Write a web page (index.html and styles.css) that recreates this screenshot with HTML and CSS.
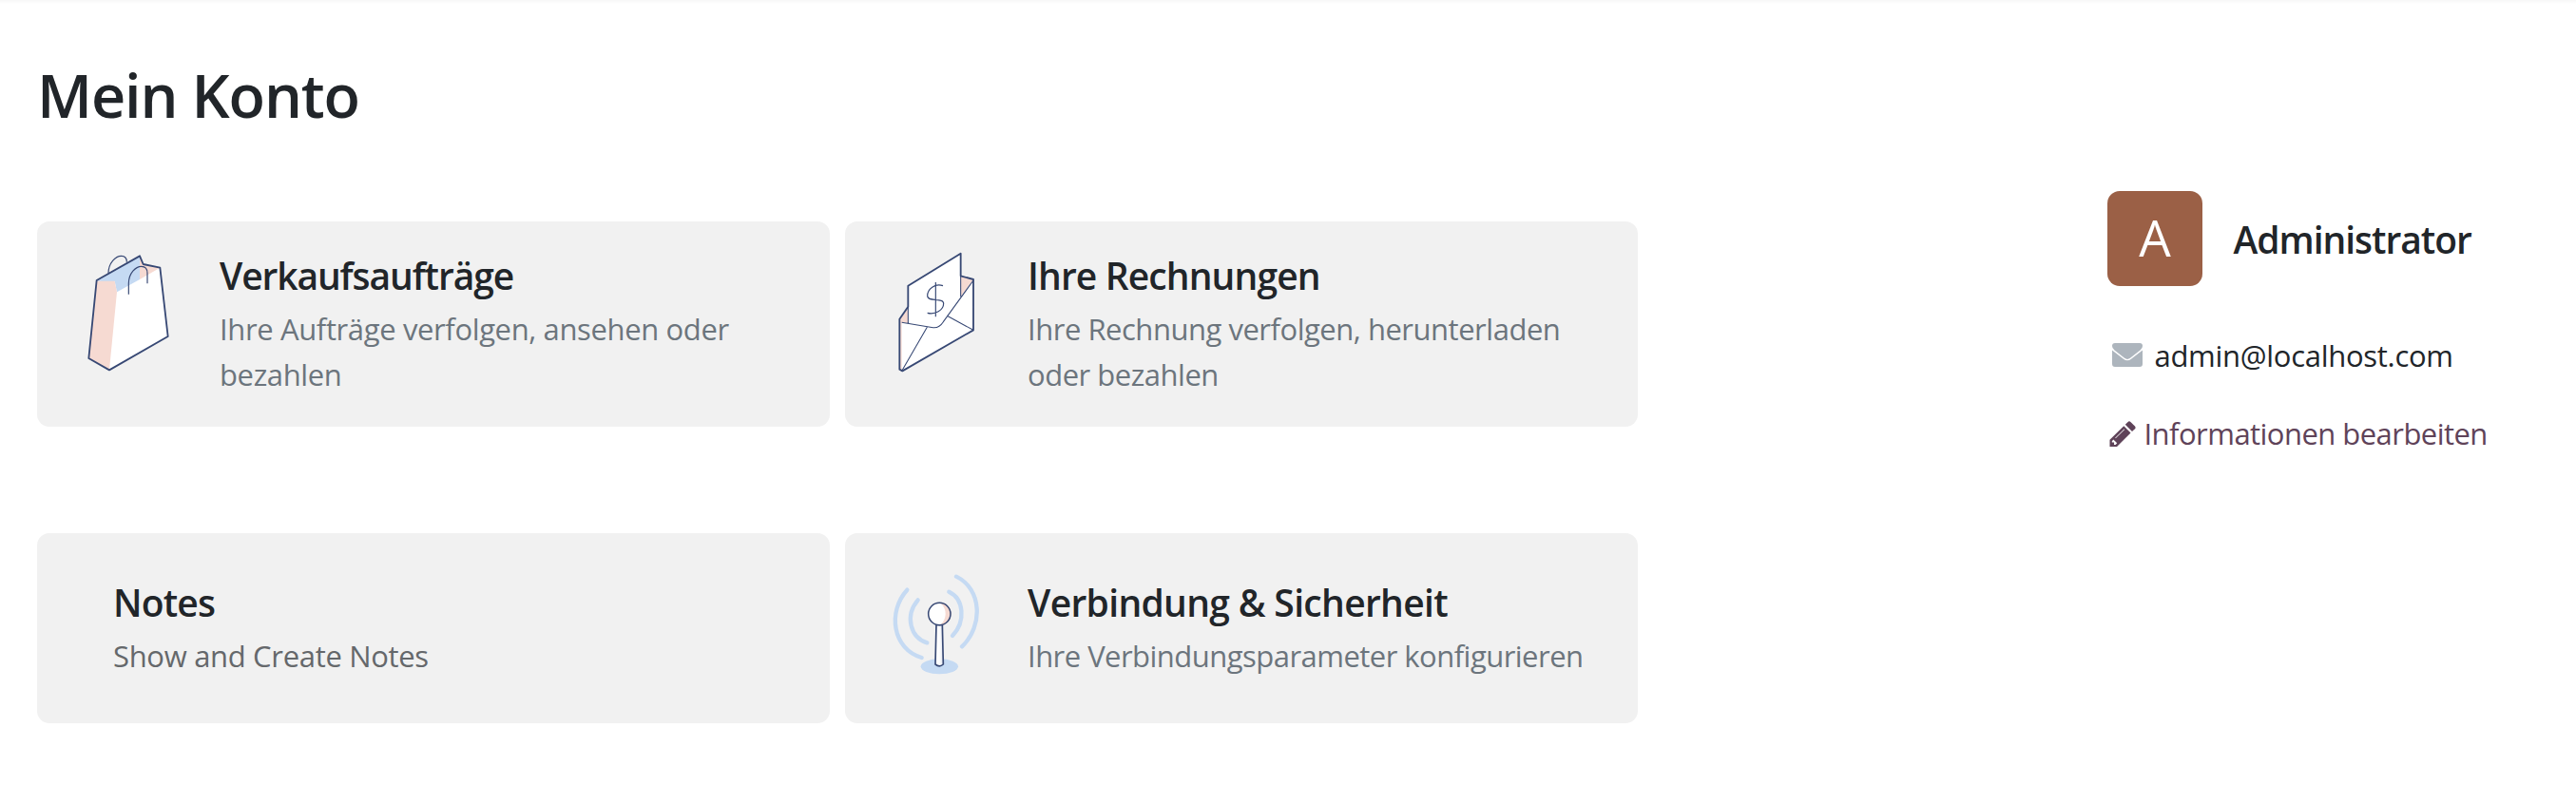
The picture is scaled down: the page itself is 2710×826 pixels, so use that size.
FILE: index.html
```
<!DOCTYPE html>
<html lang="de">
<head>
<meta charset="utf-8">
<title>Mein Konto</title>
<link rel="stylesheet" href="styles.css">
</head>
<body>
<main class="portal">
  <h1 class="portal-title">Mein Konto</h1>
  <div class="portal-body">
    <section class="cards">
      <a class="card">
        <svg class="card-icon card-icon-tall" viewBox="0 0 390 450">
          <path d="M132 113C132 80 155 58 173 58C184 58 190 65 190 77" fill="none" stroke="#374874" stroke-width="3.5"/>
          <path d="M95 135L231 58L242 84L295 95L320 312L135 418L70 381Z" fill="#fff"/>
          <path d="M95 135L231 58V132L159 172L152 138H95Z" fill="#c5daf3"/>
          <path d="M231 58L242 84L295 95L231 132Z" fill="#f6dad2"/>
          <path d="M95 137H152L159 172L135 418L70 381Z" fill="#f6dad2"/>
          <path d="M95 135L231 58L242 84L295 95L320 312L135 418L70 381Z" fill="none" stroke="#374874" stroke-width="5.5" stroke-linejoin="round"/>
          <path d="M196 179V145C196 112 219 91 236 91C249 91 255 98 255 112V145" fill="none" stroke="#374874" stroke-width="3.5"/>
        </svg>
        <div class="card-text">
          <h2 class="card-title t-orders">Verkaufsaufträge</h2>
          <p class="card-desc d-orders">Ihre Aufträge verfolgen, ansehen oder bezahlen</p>
        </div>
      </a>
      <a class="card">
        <svg class="card-icon card-icon-tall" viewBox="0 0 390 450">
          <path d="M79 257L106 218L272 121L312 132V292L88 421L79 416Z" fill="#fff"/>
          <path d="M79 257L106 218V270L86 268V419L79 416Z" fill="#f6dad2"/>
          <path d="M272 121L312 132L272 187Z" fill="#f6dad2"/>
          <path d="M106 270V152L272 50V187L217 263Q202 285 185 284Z" fill="#fff"/>
          <path d="M86 268L185 284Q204 286 217 266L312 135M88 418L166 283M229 247L312 292M106 270V218M272 121V187" fill="none" stroke="#374874" stroke-width="3.2"/>
          <path d="M106 218L79 257V416L88 421L312 292V132L272 121V50L106 152Z" fill="none" stroke="#374874" stroke-width="5.5" stroke-linejoin="round"/>
          <path d="M193 141V250M216 152C191 143 167 163 167 184C167 205 218 188 218 208C218 230 191 244 167 238" fill="none" stroke="#374874" stroke-width="3.5"/>
        </svg>
        <div class="card-text">
          <h2 class="card-title t-invoices">Ihre Rechnungen</h2>
          <p class="card-desc d-invoices">Ihre Rechnung verfolgen, herunterladen oder bezahlen</p>
        </div>
      </a>
      <a class="card card-plain">
        <div class="card-text">
          <h2 class="card-title t-notes">Notes</h2>
          <p class="card-desc d-notes">Show and Create Notes</p>
        </div>
      </a>
      <a class="card">
        <svg class="card-icon card-icon-short" viewBox="0 0 390 390">
          <defs><linearGradient id="pole"><stop offset="0.5" stop-color="#fff"/><stop offset="1" stop-color="#dfe4ee"/></linearGradient></defs>
          <ellipse cx="205" cy="334" rx="59" ry="24" fill="#c5daf3"/>
          <g fill="none" stroke="#c5daf3" stroke-width="13" stroke-linecap="round">
            <path d="M103 92C40 161 57 280 149 306"/>
            <path d="M137 124C94 175 114 243 166 259"/>
            <path d="M235 98C282 120 289 191 246 237"/>
            <path d="M258 50C338 88 345 205 276 271"/>
          </g>
          <path d="M195 202L192 327Q205 338 217 327L214 202Z" fill="url(#pole)" stroke="#374874" stroke-width="5" stroke-linejoin="round"/>
          <circle cx="205" cy="168" r="35" fill="#fff"/>
          <path d="M207 133A35 35 0 0 1 207 203Q224 189 224 168Q224 147 207 133Z" fill="#f6dad2"/>
          <circle cx="205" cy="168" r="35" fill="none" stroke="#374874" stroke-width="4.5"/>
        </svg>
        <div class="card-text">
          <h2 class="card-title t-security">Verbindung &amp; Sicherheit</h2>
          <p class="card-desc d-security">Ihre Verbindungsparameter konfigurieren</p>
        </div>
      </a>
    </section>
    <aside class="profile">
      <div class="profile-head">
        <div class="avatar">A</div>
        <div class="profile-name">Administrator</div>
      </div>
      <div class="profile-mail">
        <svg class="mail-icon" viewBox="0 0 32 25">
          <path d="M3 0H29Q32 0 32 3Q32 5.500 29.500 7.500L19 15.800Q16 18 13 15.800L2.500 7.500Q0 5.500 0 3Q0 0 3 0Z"/>
          <path d="M0 7.500L12 16.800Q16 19.800 20 16.800L32 7.500V22Q32 25 29 25H3Q0 25 0 22Z"/>
        </svg>
        <span>admin@localhost.com</span>
      </div>
      <a class="profile-edit">
        <svg class="edit-icon" viewBox="0 0 28 28">
          <path fill-rule="evenodd" d="M15.300 5.200L22.500 12.400L8 27H0.500V19.700ZM2.800 21.200V22.500H5V25H6.600L8.200 23.300L4.300 19.600ZM15.600 8.400L6.200 17.800L6.700 18.300L16.100 8.900Z"/>
          <path d="M16.800 3.700L19.600 0.900Q21 -0.300 22.400 0.900L27 5.500Q28.200 6.900 27 8.300L24 11.100Z"/>
        </svg>
        <span>Informationen bearbeiten</span>
      </a>
    </aside>
  </div>
</main>
</body>
</html>
```
FILE: styles.css
```
* { box-sizing: border-box; }
body {
  margin: 0;
  background: #fff linear-gradient(#f7f7f7, #fff) 0 0 / 100% 4px no-repeat;
  color: #212529;
  font: 31px/48px "Open Sans", "Noto Sans", sans-serif;
}
h1, h2, p { margin: 0; }

.portal { padding: 61px 39px 0; }
.portal-title {
  font-size: 63px;
  line-height: 77px;
  font-weight: 600;
  letter-spacing: -1.15px;
}
.portal-body { display: flex; padding-top: 63px; }

.cards {
  display: grid;
  grid-template-columns: 834px 834px;
  grid-template-rows: 216px 200px;
  gap: 112px 16px;
  margin-top: 32px;
}
.card {
  display: flex;
  align-items: center;
  gap: 31px;
  padding: 2px 48px 0 31px;
  border-radius: 13px;
  background: #f1f1f1;
}
.card-plain { padding-left: 80px; }
.card-icon { flex: none; align-self: flex-start; width: 130px; }
.card-icon-tall { height: 150px; margin-top: 15px; }
.card-icon-short { height: 130px; margin-top: 27px; }
.card-text { flex: 1; }
.card-title {
  margin-bottom: 8px;
  font-size: 39px;
  line-height: 48px;
  font-weight: 600;
}
.card-desc { color: #6c757d; }
.t-orders { letter-spacing: -1.12px; }
.t-invoices { letter-spacing: -0.88px; }
.t-notes { letter-spacing: -0.8px; }
.t-security { letter-spacing: -0.67px; }
.d-orders { letter-spacing: -0.37px; }
.d-invoices { letter-spacing: -0.48px; }
.d-notes { letter-spacing: -0.32px; color: #65686b; }
.d-security { letter-spacing: -0.53px; }

.profile { margin-left: 494px; }
.profile-head { display: flex; align-items: center; gap: 32.5px; }
.avatar {
  width: 100px;
  height: 100px;
  border-radius: 13px;
  background: #9b6046;
  color: #fff;
  font-size: 53px;
  font-weight: 500;
  line-height: 97px;
  text-align: center;
}
.profile-name {
  padding-top: 2px;
  font-size: 39px;
  font-weight: 600;
  letter-spacing: -1.03px;
}
.profile-mail, .profile-edit { display: flex; white-space: nowrap; }
.profile-mail { margin-top: 49px; padding-left: 5px; gap: 12.5px; letter-spacing: -0.29px; }
.profile-edit { margin-top: 34px; padding-left: 2px; gap: 8.5px; letter-spacing: -0.54px; color: #5f4359; }
.mail-icon { width: 32px; height: 25px; margin-top: 11px; fill: #adb5bd; }
.edit-icon { width: 28px; height: 28px; margin-top: 11px; fill: #5f4359; }
```
